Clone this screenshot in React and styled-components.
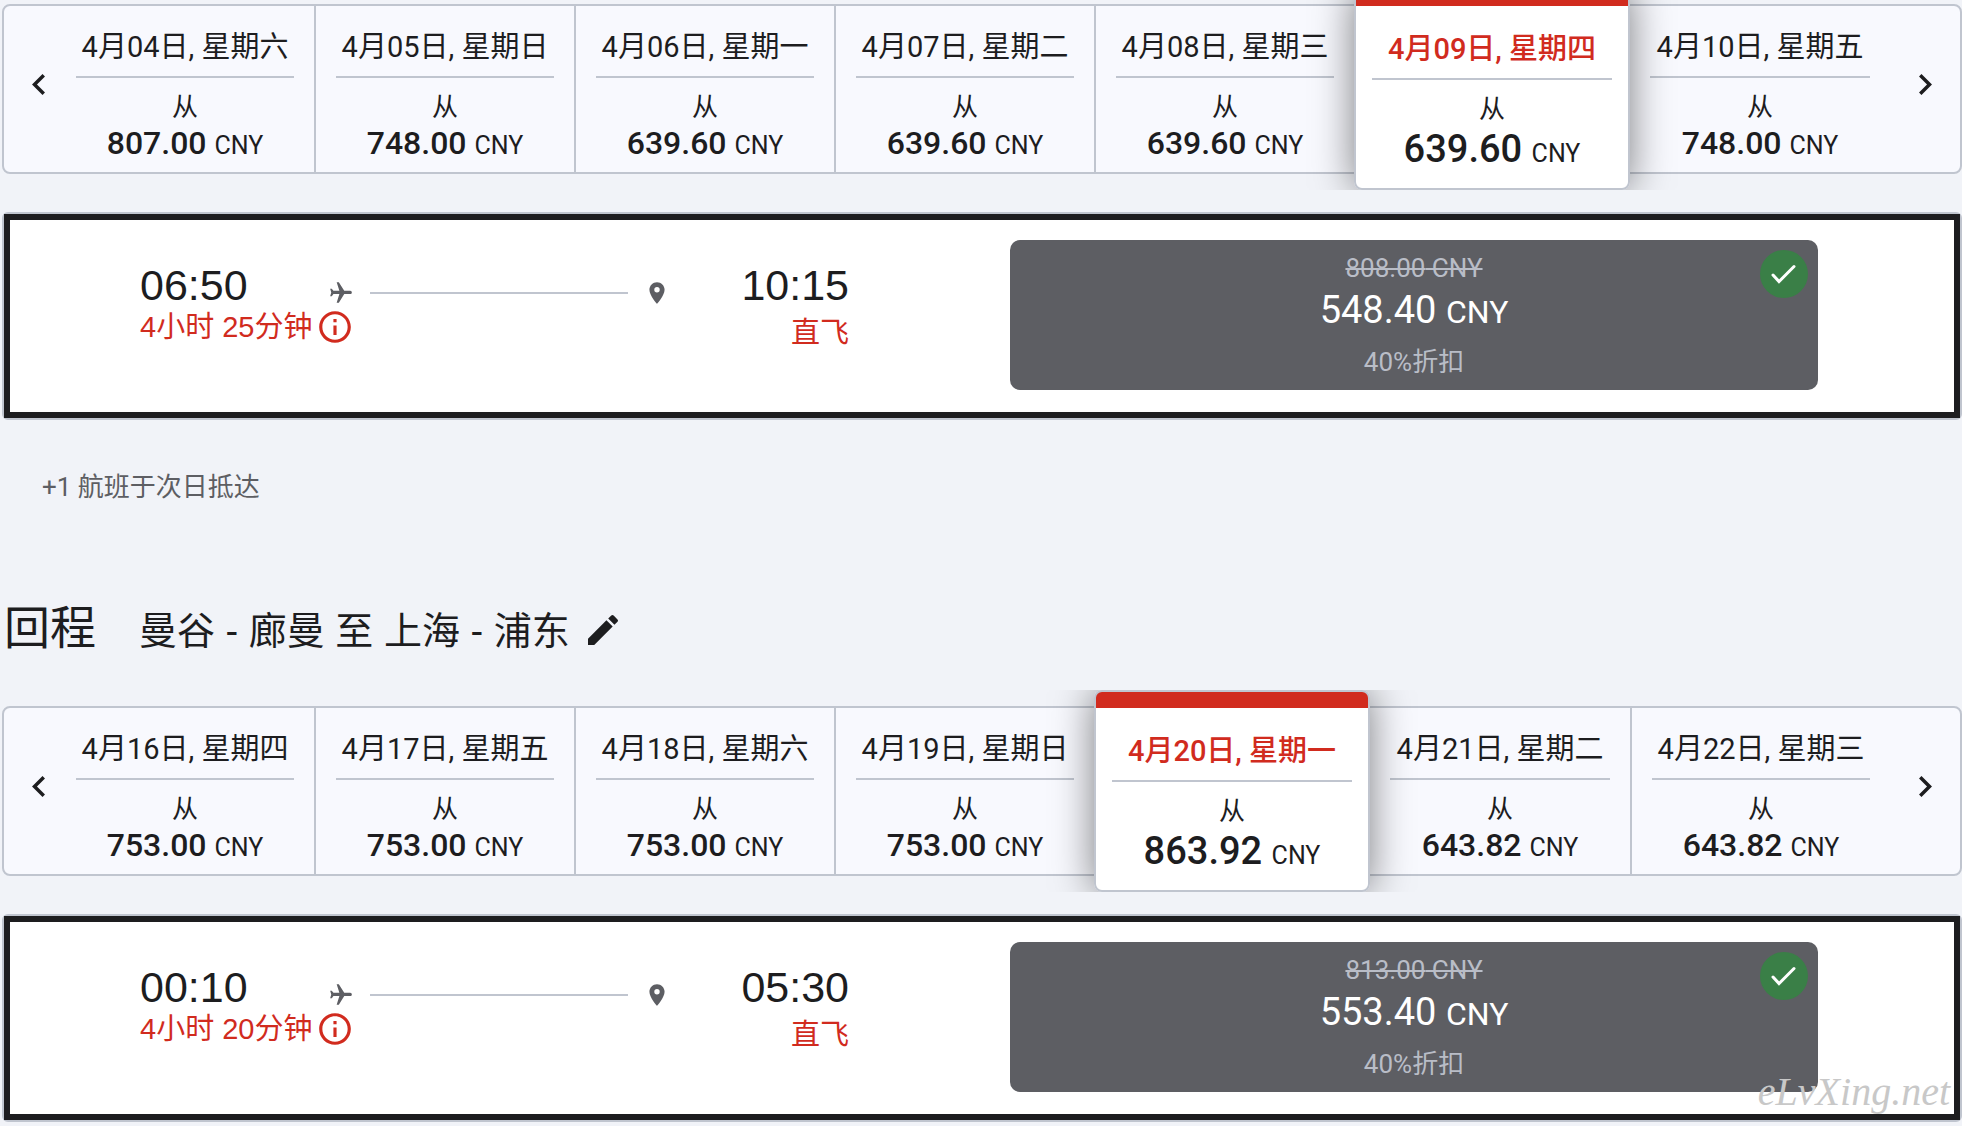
import React from 'react';
import styled, { createGlobalStyle, css } from 'styled-components';
import { MdEdit, MdFlight, MdLocationOn, MdOutlineInfo } from 'react-icons/md';

const GlobalStyle = createGlobalStyle`
  * {
    box-sizing: border-box;
  }

  body {
    margin: 0;
    background: #f1f3f8;
    color: #1d1d1f;
    font-family: Roboto, 'Noto Sans CJK SC', sans-serif;
  }

  button {
    margin: 0;
    padding: 0;
    border: 0;
    background: none;
    color: inherit;
    font: inherit;
    cursor: pointer;
  }
`;

const Page = styled.main`
  position: relative;
  padding: 4px 0 4px 2px;
  overflow: hidden;
`;

const Strip = styled.div`
  display: flex;
  height: 170px;
  border: 2px solid #c0c5cf;
  border-radius: 8px;
  background: #f8f9fe;
`;

const NavButton = styled.button`
  display: flex;
  align-items: center;
  flex: none;
  width: ${({ $next }) => ($next ? '70px' : '50px')};
  justify-content: ${({ $next }) => ($next ? 'flex-end' : 'flex-start')};

  && {
    padding: ${({ $next }) => ($next ? '0 28px 10px 0' : '0 0 10px 28px')};
  }

  svg {
    flex: none;
    display: block;
  }
`;

const DayDate = styled.span`
  display: block;
  padding-bottom: 8px;
  border-bottom: 2px solid #c0c5cf;
  font-size: 29px;
  line-height: 42px;
  text-align: center;
  white-space: nowrap;
`;

const DayFrom = styled.span`
  display: block;
  padding-top: 10px;
  font-size: 26px;
  line-height: 38px;
`;

const DayPrice = styled.span`
  display: block;
  font-size: 32px;
  font-weight: 500;
  line-height: 34px;
  white-space: nowrap;
`;

const Currency = styled.span`
  font-size: ${({ $large }) => ($large ? '32px' : '25px')};
  font-weight: 400;
`;

const activeDay = css`
  z-index: 1;
  flex-basis: 276px;
  margin: -18px 0;
  padding: 38px 16px 0;
  border: 2px solid #c0c5cf;
  border-radius: 8px;
  background: linear-gradient(#d12b1e 16px, #fff 16px);
  box-shadow: 0 0 40px rgba(0, 0, 0, 0.5);
  clip-path: inset(0 -48px);

  ${DayDate} {
    color: #d12b1e;
    font-weight: 500;
  }

  ${DayPrice} {
    font-size: 38px;
    line-height: 42px;
  }
`;

const dividers = {
  line: '2px solid #c0c5cf',
  blank: '2px solid transparent',
  none: '0',
};

const Day = styled.button`
  && {
    position: relative;
    display: flex;
    flex-direction: column;
    align-items: stretch;
    flex: 1 1 260px;
    min-width: 0;
    padding: 20px 20px 0;
    border-left: ${({ $divider }) => dividers[$divider]};
    text-align: center;

    ${({ $active }) => $active && activeDay}
  }
`;

const FlightCard = styled.article`
  margin-top: 38px;
  border: 2px solid #c0c5cf;
  border-radius: 6px;
`;

const FlightFrame = styled.div`
  display: grid;
  grid-template-columns: 709fr 808fr;
  column-gap: 161px;
  padding: 20px 136px 22px 130px;
  border: 6px solid #1d1d1f;
  background: #fff;
`;

const Journey = styled.div`
  padding-top: 19px;
  font-family: 'Liberation Sans', 'Noto Sans CJK SC', sans-serif;
`;

const JourneyRow = styled.div`
  display: flex;
  justify-content: space-between;
`;

const Time = styled.time`
  font-size: 43px;
  line-height: 52px;
`;

const Track = styled.div`
  display: flex;
  flex: 1;
  align-items: center;
  gap: 16px;
  margin: 0 71px 0 80px;
  padding-top: 16px;
  color: #5d5e63;
`;

const PlaneIcon = styled(MdFlight)`
  flex: none;
  transform: rotate(90deg);
`;

const PinIcon = styled(MdLocationOn)`
  flex: none;
`;

const TrackLine = styled.span`
  flex: 1;
  height: 2px;
  background: #c0c5cf;
`;

const Duration = styled.button`
  && {
    display: flex;
    align-items: center;
    gap: 4px;
    height: 32px;
    color: #d12b1e;
    font-family: inherit;
    font-size: 29px;
    line-height: 34px;
  }
`;

const Stops = styled.span`
  color: #d12b1e;
  font-size: 29px;
  line-height: 44px;
`;

const Fare = styled.button`
  && {
    position: relative;
    height: 150px;
    border-radius: 10px;
    background: #5d5e63;
    color: #fff;
    text-align: center;
  }
`;

const OldPrice = styled.s`
  display: block;
  color: #b9bdc7;
  font-size: 26px;
  line-height: 38px;
`;

const NewPrice = styled.span`
  display: block;
  font-size: 38px;
  line-height: 46px;
`;

const Discount = styled.span`
  display: block;
  margin-top: 8px;
  color: #b9bdc7;
  font-size: 26px;
  line-height: 38px;
`;

const SelectedBadge = styled.span`
  position: absolute;
  top: 10px;
  right: 10px;
  width: 48px;
  height: 48px;
  border-radius: 50%;
  background: #3a7f47;
`;

const Footnote = styled.p`
  margin: 49px 0 0 40px;
  color: #5d5e63;
  font-size: 26px;
  line-height: 36px;
`;

const LegHeader = styled.header`
  display: flex;
  align-items: baseline;
  height: 56px;
  margin: 95px 0 50px 2px;
  line-height: 56px;
`;

const LegTitle = styled.h2`
  margin: 0 43px 0 0;
  font-size: 46px;
  font-weight: 400;
`;

const Route = styled.span`
  font-family: 'Liberation Sans', 'Noto Sans CJK SC', sans-serif;
  font-size: 38px;
`;

const EditButton = styled.button`
  && {
    align-self: center;
    margin-left: 13px;
    padding-top: 4px;
  }

  svg {
    display: block;
  }
`;

const Watermark = styled.span`
  position: absolute;
  right: 12px;
  bottom: 12px;
  color: #c8c8c8;
  font-family: 'Liberation Serif', serif;
  font-size: 40px;
  font-style: italic;
  line-height: 44px;
`;

const outboundDays = [
  { date: '4月04日, 星期六', price: '807.00' },
  { date: '4月05日, 星期日', price: '748.00' },
  { date: '4月06日, 星期一', price: '639.60' },
  { date: '4月07日, 星期二', price: '639.60' },
  { date: '4月08日, 星期三', price: '639.60' },
  { date: '4月09日, 星期四', price: '639.60', active: true },
  { date: '4月10日, 星期五', price: '748.00' },
];

const returnDays = [
  { date: '4月16日, 星期四', price: '753.00' },
  { date: '4月17日, 星期五', price: '753.00' },
  { date: '4月18日, 星期六', price: '753.00' },
  { date: '4月19日, 星期日', price: '753.00' },
  { date: '4月20日, 星期一', price: '863.92', active: true },
  { date: '4月21日, 星期二', price: '643.82' },
  { date: '4月22日, 星期三', price: '643.82' },
];

const getDivider = (days, index) => {
  if (index === 0) return 'blank';
  return days[index - 1].active ? 'none' : 'line';
};

const DateStrip = ({ days }) => {
  return (
    <Strip>
      <NavButton type="button">
        <svg width="13" height="21" viewBox="8 6 7.41 12" fill="currentColor">
          <path d="M15.41 7.41 14 6l-6 6 6 6 1.41-1.41L10.83 12z" />
        </svg>
      </NavButton>
      {days.map((day, index) => (
        <Day
          key={day.date}
          type="button"
          $active={day.active}
          $divider={getDivider(days, index)}
        >
          <DayDate>{day.date}</DayDate>
          <DayFrom>从</DayFrom>
          <DayPrice>
            {day.price} <Currency>CNY</Currency>
          </DayPrice>
        </Day>
      ))}
      <NavButton type="button" $next>
        <svg width="13" height="21" viewBox="8.59 6 7.41 12" fill="currentColor">
          <path d="M10 6 8.59 7.41 13.17 12l-4.58 4.59L10 18l6-6z" />
        </svg>
      </NavButton>
    </Strip>
  );
};

const Flight = ({ departure, arrival, duration, oldPrice, price }) => {
  return (
    <FlightCard>
      <FlightFrame>
        <Journey>
          <JourneyRow>
            <Time>{departure}</Time>
            <Track>
              <PlaneIcon size={26} />
              <TrackLine />
              <PinIcon size={26} />
            </Track>
            <Time>{arrival}</Time>
          </JourneyRow>
          <JourneyRow>
            <Duration type="button">
              {duration}
              <MdOutlineInfo size={38} />
            </Duration>
            <Stops>直飞</Stops>
          </JourneyRow>
        </Journey>
        <Fare type="button">
          <OldPrice>{oldPrice} CNY</OldPrice>
          <NewPrice>
            {price} <Currency $large>CNY</Currency>
          </NewPrice>
          <Discount>40%折扣</Discount>
          <SelectedBadge>
            <svg width="48" height="48" viewBox="0 0 48 48" fill="none" stroke="#fff" strokeWidth="3">
              <path d="M13 25l6 6.5 15-15" strokeLinecap="round" />
            </svg>
          </SelectedBadge>
        </Fare>
      </FlightFrame>
    </FlightCard>
  );
};

const App = () => {
  return (
    <Page>
      <GlobalStyle />
      <DateStrip days={outboundDays} />
      <Flight
        departure="06:50"
        arrival="10:15"
        duration="4小时 25分钟"
        oldPrice="808.00"
        price="548.40"
      />
      <Footnote>+1 航班于次日抵达</Footnote>

      <LegHeader>
        <LegTitle>回程</LegTitle>
        <Route>曼谷 - 廊曼 至 上海 - 浦东</Route>
        <EditButton type="button">
          <MdEdit size={40} />
        </EditButton>
      </LegHeader>
      <DateStrip days={returnDays} />
      <Flight
        departure="00:10"
        arrival="05:30"
        duration="4小时 20分钟"
        oldPrice="813.00"
        price="553.40"
      />
      <Watermark>eLvXing.net</Watermark>
    </Page>
  );
};

export default App;
